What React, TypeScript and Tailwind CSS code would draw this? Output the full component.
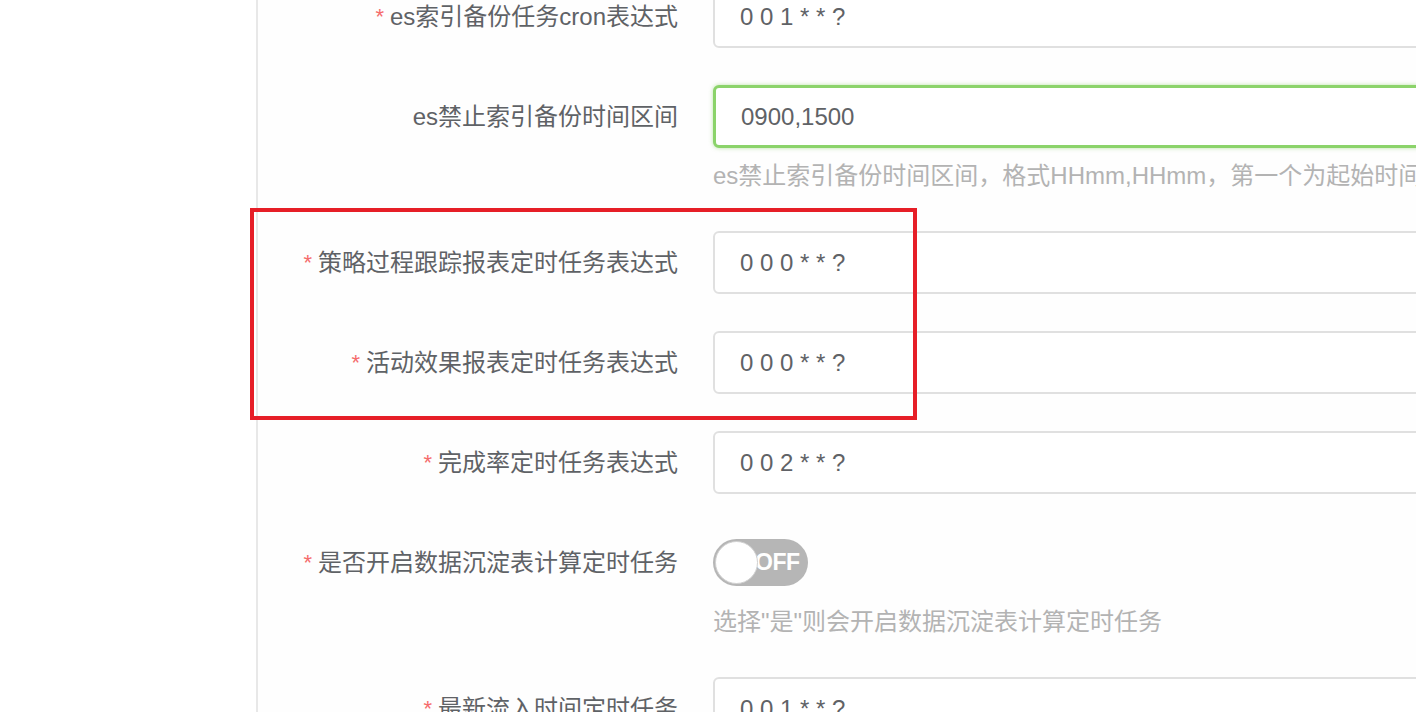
import React from "react";

const FONT = '"Liberation Sans", "Noto Sans CJK SC", sans-serif';

function Label({ text, required }: { text: string; required?: boolean }) {
  return (
    <div className="w-[455px] shrink-0 h-[63px] flex items-center justify-end pr-[35px] text-[24px] text-[#5f6266] whitespace-nowrap">
      {required && <span className="text-[#f56c6c] mr-[6px] text-[22px]">*</span>}
      <span>{text}</span>
    </div>
  );
}

function Input({ value, focused, spaced }: { value: string; focused?: boolean; spaced?: boolean }) {
  return (
    <div
      className={
        "w-[820px] h-[63px] rounded-[6px] flex items-center pl-[25px] text-[24px] text-[#606266] bg-white " +
        (focused
          ? "border-[3px] border-[#8bd36a] shadow-[0_0_4px_rgba(120,200,80,0.5)]"
          : "border-2 border-[#e0e0e0]")
      }
    >
      <span className={spaced ? "tracking-[0px]" : ""}>{value}</span>
    </div>
  );
}

function Row({
  label,
  required,
  children,
  help,
}: {
  label: string;
  required?: boolean;
  children: React.ReactNode;
  help?: string;
}) {
  return (
    <div className="flex mb-[37px]">
      <Label text={label} required={required} />
      <div className="flex flex-col">
        <div className="h-[63px] flex items-center">{children}</div>
        {help && (
          <div className="pt-[11px] h-[46px] leading-[34px] text-[24px] text-[#b3b3b3] whitespace-nowrap">
            {help}
          </div>
        )}
      </div>
    </div>
  );
}

export default function App() {
  return (
    <div className="relative w-[1416px] h-[712px] overflow-hidden bg-white flex" style={{ fontFamily: FONT }}>
      <div className="w-[256px] shrink-0 bg-white" />
      <div className="w-[2px] shrink-0 bg-[#e8e8e8]" />
      <div className="flex-1 bg-[#fefefe]">
        <div className="mt-[-15px]">
          <Row label="es索引备份任务cron表达式" required>
            <Input value="0 0 1 * * ?" />
          </Row>
          <Row label="es禁止索引备份时间区间" help="es禁止索引备份时间区间，格式HHmm,HHmm，第一个为起始时间，第二个为结束时间">
            <Input value="0900,1500" focused />
          </Row>
          <Row label="策略过程跟踪报表定时任务表达式" required>
            <Input value="0 0 0 * * ?" />
          </Row>
          <Row label="活动效果报表定时任务表达式" required>
            <Input value="0 0 0 * * ?" />
          </Row>
          <Row label="完成率定时任务表达式" required>
            <Input value="0 0 2 * * ?" />
          </Row>
          <Row label="是否开启数据沉淀表计算定时任务" required help={"选择\"是\"则会开启数据沉淀表计算定时任务"}>
            <div className="relative w-[95px] h-[47px] rounded-full bg-[#b6b6b6] flex items-center">
              <div className="absolute left-[2px] top-[2px] w-[43px] h-[43px] rounded-full bg-white border border-[#d0d0d0]" />
              <span className="ml-[42px] text-white text-[23px] font-bold tracking-[-0.5px]">OFF</span>
            </div>
          </Row>
          <Row label="最新流入时间定时任务" required>
            <Input value="0 0 1 * * ?" />
          </Row>
        </div>
      </div>
      <div className="absolute left-[250px] top-[208px] w-[667px] h-[212px] border-[4px] border-[#e61e27] pointer-events-none" />
    </div>
  );
}
